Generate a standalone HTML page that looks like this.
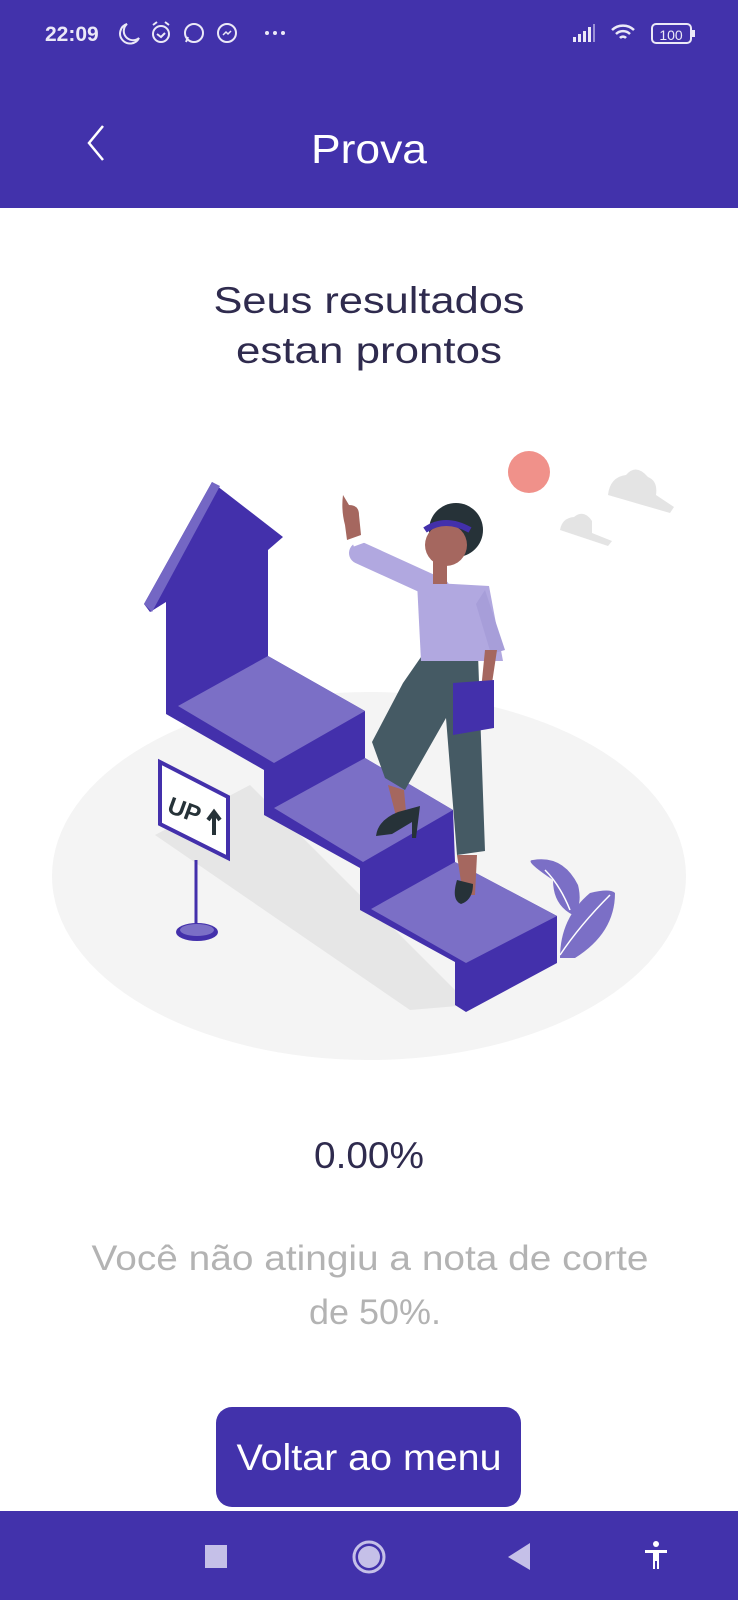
<!DOCTYPE html>
<html><head><meta charset="utf-8"><style>
html,body{margin:0;padding:0;background:#fff;}
svg{display:block;}
text{font-family:"Liberation Sans",sans-serif;}
</style></head><body>
<svg width="738" height="1600" viewBox="0 0 738 1600" xmlns="http://www.w3.org/2000/svg">
<rect x="0" y="0" width="738" height="208" fill="#4232ab"/>
<!-- status bar -->
<text x="45" y="41" font-size="21" font-weight="bold" fill="#ebe9f7">22:09</text>
<path d="M127 24 a10 10 0 1 0 12 14 a8 8 0 0 1 -12 -14z" fill="none" stroke="#ebe9f7" stroke-width="2"/>
<circle cx="161" cy="34" r="8" fill="none" stroke="#ebe9f7" stroke-width="2"/>
<path d="M157 34 l4 3 4-4 M153 25 l4-3 M169 25 l-4-3" stroke="#ebe9f7" stroke-width="2" fill="none"/>
<circle cx="194" cy="33" r="9" fill="none" stroke="#ebe9f7" stroke-width="2"/>
<path d="M186 42 l2-5" stroke="#ebe9f7" stroke-width="2"/>
<circle cx="227" cy="33" r="9" fill="none" stroke="#ebe9f7" stroke-width="2"/>
<path d="M223 35 l3-3 2 2 3-3" stroke="#ebe9f7" stroke-width="1.5" fill="none"/>
<circle cx="267" cy="33" r="2" fill="#ebe9f7"/><circle cx="275" cy="33" r="2" fill="#ebe9f7"/><circle cx="283" cy="33" r="2" fill="#ebe9f7"/>
<rect x="573" y="37" width="3" height="5" fill="#ebe9f7"/><rect x="578" y="34" width="3" height="8" fill="#ebe9f7"/><rect x="583" y="31" width="3" height="11" fill="#ebe9f7"/><rect x="588" y="27" width="3" height="15" fill="#ebe9f7"/><rect x="593" y="24" width="2" height="18" fill="#9b92d6"/>
<path d="M612 30 a16 16 0 0 1 22 0 M616 34 a10 10 0 0 1 14 0 M620 38 a4 4 0 0 1 6 0" stroke="#ebe9f7" stroke-width="2.5" fill="none"/>
<rect x="652" y="24" width="39" height="19" rx="4" fill="none" stroke="#ebe9f7" stroke-width="2"/>
<rect x="692" y="30" width="3" height="7" fill="#ebe9f7"/>
<text x="671" y="40" font-size="14" fill="#ebe9f7" text-anchor="middle">100</text>
<!-- app bar -->
<polyline points="103,126 89,143 103,160" fill="none" stroke="#fff" stroke-width="2.5"/>
<text x="369" y="163" font-size="41" fill="#fff" text-anchor="middle" textLength="116" lengthAdjust="spacingAndGlyphs">Prova</text>
<!-- title -->
<text x="369" y="313" font-size="37" fill="#2f2b4e" text-anchor="middle" textLength="311" lengthAdjust="spacingAndGlyphs">Seus resultados</text>
<text x="369" y="363" font-size="37" fill="#2f2b4e" text-anchor="middle" textLength="266" lengthAdjust="spacingAndGlyphs">estan prontos</text>
<!-- illustration -->
<ellipse cx="369" cy="876" rx="317" ry="184" fill="#f4f4f4"/>
<polygon points="155,835 250,785 470,1005 410,1010" fill="#e6e6e6"/>
<circle cx="529" cy="472" r="21" fill="#f0918a"/>
<path d="M608 495 q2-18 18-20 q10-12 22 2 q10 4 8 18 l18 12 -4 6z" fill="#e4e4e4"/>
<path d="M560 530 q2-12 14-13 q10-8 18 4 l0 12 20 8 -4 5z" fill="#e4e4e4"/>
<polygon points="212,482 283,537 268,550 268,656 365,711 365,758 453,810 455,862 557,916 557,963 466,1012 455,1005 455,962 360,910 360,868 264,815 264,770 166,714 166,602 150,612 144,604" fill="#4330ab"/>
<polygon points="212,482 220,486 152,612 144,604" fill="#7467c4"/>
<polygon points="178,706 268,656 365,711 274,763" fill="#7b6fc6"/>
<polygon points="274,808 365,758 453,810 363,862" fill="#7b6fc6"/>
<polygon points="371,909 455,862 557,916 466,963" fill="#7b6fc6"/>
<!-- sign -->
<line x1="196" y1="860" x2="196" y2="930" stroke="#4330ab" stroke-width="3"/>
<ellipse cx="197" cy="932" rx="21" ry="9" fill="#4330ab"/>
<ellipse cx="197" cy="930" rx="17" ry="6" fill="#7b6fc6"/>
<polygon points="160,762 228,797 228,858 160,824" fill="#fff" stroke="#4330ab" stroke-width="4"/>
<text x="166" y="812" font-size="24" font-weight="bold" fill="#263238" transform="rotate(20 166 812)">UP</text>
<path d="M214 835 v-22 M208 820 l6-8 6 8" stroke="#263238" stroke-width="4" fill="none"/>
<!-- leaves -->
<path d="M553 880 q-30-20-20 -20 q30 -5 45 25 q5 20 -5 30 q-20 -10 -20 -35z" fill="#7b6fc6"/>
<path d="M560 958 q0-40 30-65 q20 -5 25 0 q0 40 -40 65z" fill="#7b6fc6"/>
<path d="M560 955 q20-30 50-60 M545 870 q15 15 25 40" stroke="#fff" stroke-width="1.5" fill="none"/>
<!-- woman -->
<path d="M421 657 L478 654 L485 851 L457 855 L446 718 L405 790 L385 778 L372 742 L403 683Z" fill="#455a64"/>
<path d="M388 785 l16 5 2 22 -10 4z" fill="#a5675f"/>
<path d="M457 855 l20 0 -2 40 -12 0z" fill="#a5675f"/>
<path d="M398 812 q-20 8 -22 24 l16 -2 20 -12 0 16 4 0 4 -32z" fill="#263238"/>
<path d="M457 880 q-6 20 4 24 q12 -4 12 -20z" fill="#263238"/>
<path d="M417 582 L489 586 L503 661 L421 661 Z" fill="#b1a8e0"/>
<path d="M485 590 l20 60 -14 4 -15 -50z" fill="#a79ed9"/>
<path d="M497 650 l-6 40 -10 0 4 -40z" fill="#a5675f"/>
<polygon points="453,683 494,680 494,728 453,735" fill="#4330ab"/>
<path d="M360 553 L439 589" stroke="#b1a8e0" stroke-width="22" stroke-linecap="round"/>
<rect x="352" y="534" width="16" height="10" fill="#fff" transform="rotate(-20 360 540)"/>
<path d="M345 525 q-4 -15 -2 -30 l6 10 q10 0 10 10 l2 20 -14 5z" fill="#a5675f"/>
<rect x="433" y="560" width="14" height="24" fill="#a5675f"/>
<circle cx="456" cy="530" r="27" fill="#263238"/>
<circle cx="446" cy="545" r="21" fill="#a5675f"/>
<path d="M425 530 q20 -14 45 0" stroke="#4330ab" stroke-width="6" fill="none"/>
<!-- result text -->
<text x="369" y="1168" font-size="37" fill="#2f2b4e" text-anchor="middle" textLength="110" lengthAdjust="spacingAndGlyphs">0.00%</text>
<text x="370" y="1270" font-size="35" fill="#b3b3b3" text-anchor="middle" textLength="557" lengthAdjust="spacingAndGlyphs">Você não atingiu a nota de corte</text>
<text x="375" y="1324" font-size="35" fill="#b3b3b3" text-anchor="middle" textLength="132" lengthAdjust="spacingAndGlyphs">de 50%.</text>
<!-- button -->
<rect x="216" y="1407" width="305" height="100" rx="16" fill="#4232ab"/>
<text x="369" y="1470" font-size="37" fill="#fff" text-anchor="middle" textLength="265" lengthAdjust="spacingAndGlyphs">Voltar ao menu</text>
<!-- nav bar -->
<rect x="0" y="1511" width="738" height="89" fill="#4232ab"/>
<rect x="205" y="1545" width="22" height="23" fill="#c5c0e8"/>
<circle cx="369" cy="1557" r="15" fill="none" stroke="#c5c0e8" stroke-width="3"/>
<circle cx="369" cy="1557" r="11" fill="#c5c0e8"/>
<polygon points="530,1543 530,1570 508,1557" fill="#c5c0e8"/>
<circle cx="656" cy="1544" r="3" fill="#fff"/>
<path d="M645 1550 h22 v3 h-8 v16 h-2 v-8 h-2 v8 h-2 v-16 h-8z" fill="#fff"/>
</svg>
</body></html>
